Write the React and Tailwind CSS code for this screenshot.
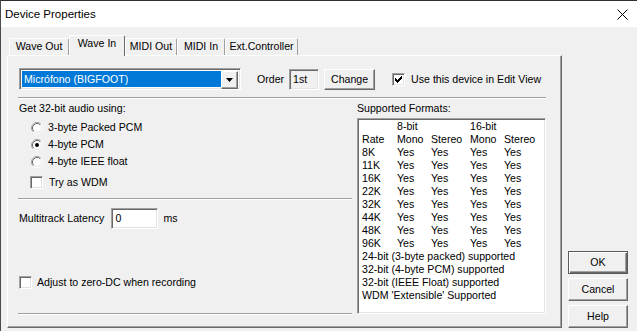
import React from "react";

const raised =
  "border border-t-white border-l-white border-r-[#696969] border-b-[#696969] shadow-[inset_-1px_-1px_0_#a0a0a0]";
const sunken =
  "border border-t-[#a0a0a0] border-l-[#a0a0a0] border-r-white border-b-white shadow-[inset_1px_1px_0_#696969,inset_-1px_-1px_0_#e3e3e3]";

function Etched({ className = "" }) {
  return <div className={`h-[2px] border-t border-b border-t-[#a0a0a0] border-b-white ${className}`} />;
}

function Check({ checked }) {
  const cols = [2, 3, 4, 3, 2, 1, 0];
  return (
    <span className={`w-[13px] h-[13px] bg-white ${sunken} flex items-center justify-center shrink-0`}>
      {checked && (
        <svg width="7" height="7" viewBox="0 0 7 7" shapeRendering="crispEdges">
          {cols.map((y, x) => (
            <rect key={x} x={x} y={y} width="1" height="3" fill="#000" />
          ))}
        </svg>
      )}
    </span>
  );
}

function Radio({ on }) {
  return (
    <svg width="12" height="12" viewBox="0 0 12 12" className="shrink-0">
      <circle cx="6" cy="6" r="5" fill="white" />
      <path d="M2.11 9.89 A5.5 5.5 0 0 1 9.89 2.11" stroke="#a0a0a0" fill="none" />
      <path d="M9.89 2.11 A5.5 5.5 0 0 1 2.11 9.89" stroke="#ffffff" fill="none" />
      <path d="M2.82 9.18 A4.5 4.5 0 0 1 9.18 2.82" stroke="#696969" fill="none" />
      <path d="M9.18 2.82 A4.5 4.5 0 0 1 2.82 9.18" stroke="#e3e3e3" fill="none" />
      {on && <circle cx="6" cy="6" r="2" fill="#000" />}
    </svg>
  );
}

const tabs = [
  { label: "Wave Out", w: "w-[60px]" },
  { label: "Wave In", w: "w-[56px]", active: true },
  { label: "MIDI Out", w: "w-[52px]" },
  { label: "MIDI In", w: "w-[48px]" },
  { label: "Ext.Controller", w: "w-[73px]" },
];

const rates = ["8K", "11K", "16K", "22K", "32K", "44K", "48K", "96K"];

export default function App() {
  return (
    <div className="w-[637px] h-[331px] overflow-hidden bg-[#f0f0f0] border-t border-l border-t-[#2e2e2e] border-l-[#4a4a4a] font-['Liberation_Sans',Arial,sans-serif] text-[10.6px] leading-[13px] text-black">
      {/* title bar */}
      <div className="h-[26px] bg-white flex items-center justify-between pl-[4px] pr-[9px]">
        <span className="text-[11.5px] mt-[1px]">Device Properties</span>
        <svg width="11" height="11" viewBox="0 0 11 11" className="mt-[1px]">
          <path d="M0.5 0.5 L10.5 10.5 M10.5 0.5 L0.5 10.5" stroke="#000" strokeWidth="1" />
        </svg>
      </div>

      <div className="flex pl-[6px] pt-[8px]">
        {/* tab control */}
        <div className="flex flex-col w-[555px]">
          <div className="flex items-end h-[20px] pl-[2px]">
            {tabs.map((t) =>
              t.active ? (
                <div
                  key={t.label}
                  className={`${t.w} h-[21px] -mb-[1px] relative z-10 bg-[#f0f0f0] border-t border-l border-r border-t-white border-l-white border-r-[#696969] rounded-t-[2px] text-center pt-[1px]`}
                >
                  {t.label}
                </div>
              ) : (
                <div
                  key={t.label}
                  className={`${t.w} h-[17px] border-t border-l border-r border-t-white border-l-white border-r-[#a0a0a0] rounded-t-[2px] text-center pt-[1px]`}
                >
                  {t.label}
                </div>
              )
            )}
          </div>

          <div className="h-[273px] border border-t-white border-l-white border-r-[#696969] border-b-[#696969] shadow-[inset_-1px_-1px_0_#a0a0a0] pl-[11px] pt-[12px]">
            {/* device row */}
            <div className="flex items-center h-[22px]">
              <div className={`w-[222px] h-[22px] bg-white ${sunken} flex p-[2px]`}>
                <div className="flex-1 h-[16px] bg-[#0078d7] text-white pl-[2px] flex items-center">
                  Micrófono (BIGFOOT)
                </div>
                <div className={`w-[17px] h-[18px] bg-[#f0f0f0] ${raised} flex items-center justify-center`}>
                  <svg width="7" height="4" viewBox="0 0 7 4">
                    <path d="M0 0 H7 L3.5 4 Z" fill="#000" />
                  </svg>
                </div>
              </div>
              <span className="ml-[16px]">Order</span>
              <div className={`ml-[5px] w-[30px] h-[21px] bg-[#f0f0f0] ${sunken} flex items-center pl-[3px]`}>1st</div>
              <div className={`ml-[5px] w-[51px] h-[21px] bg-[#f0f0f0] ${raised} flex items-center justify-center`}>
                Change
              </div>
              <div className="ml-[17px]">
                <Check checked />
              </div>
              <span className="ml-[6px]">Use this device in Edit View</span>
            </div>

            <Etched className="mt-[7px] w-[528px] -ml-[1px]" />

            <div className="flex -ml-[1px]">
              {/* left column */}
              <div className="w-[334px] flex flex-col">
                <div className="mt-[3px] pl-[1px]">Get 32-bit audio using:</div>
                <div className="mt-[4px] flex flex-col pl-[13px]">
                  {[
                    ["3-byte Packed PCM", false],
                    ["4-byte PCM", true],
                    ["4-byte IEEE float", false],
                  ].map(([l, on]) => (
                    <div key={l} className="h-[17px] flex items-center gap-[5px]">
                      <Radio on={on} />
                      <span>{l}</span>
                    </div>
                  ))}
                </div>
                <div className="mt-[6px] pl-[12px] flex items-center gap-[6px] h-[13px]">
                  <Check />
                  <span>Try as WDM</span>
                </div>
                <Etched className="mt-[9px]" />
                <div className="mt-[8px] pl-[1px] flex items-center h-[21px]">
                  <span>Multitrack Latency</span>
                  <div className={`ml-[7px] w-[47px] h-[21px] bg-white ${sunken} flex items-center pl-[3px]`}>0</div>
                  <span className="ml-[5px]">ms</span>
                </div>
                <div className="mt-[47px] pl-[1px] flex items-center gap-[5px] h-[13px]">
                  <Check />
                  <span>Adjust to zero-DC when recording</span>
                </div>
                <Etched className="mt-[24px]" />
              </div>

              {/* right column */}
              <div className="ml-[5px] w-[189px] flex flex-col">
                <div className="mt-[3px]">Supported Formats:</div>
                <div className={`mt-[3px] h-[196px] bg-white ${sunken} pl-[4px] pt-[1px]`}>
                  <div className="grid grid-cols-[35px_34px_39px_34px_auto]">
                    <span />
                    <span className="col-span-2">8-bit</span>
                    <span className="col-span-2">16-bit</span>
                    <span>Rate</span>
                    <span>Mono</span>
                    <span>Stereo</span>
                    <span>Mono</span>
                    <span>Stereo</span>
                    {rates.map((r) => (
                      <React.Fragment key={r}>
                        <span>{r}</span>
                        <span>Yes</span>
                        <span>Yes</span>
                        <span>Yes</span>
                        <span>Yes</span>
                      </React.Fragment>
                    ))}
                  </div>
                  <div>24-bit (3-byte packed) supported</div>
                  <div>32-bit (4-byte PCM) supported</div>
                  <div>32-bit (IEEE Float) supported</div>
                  <div>WDM 'Extensible' Supported</div>
                </div>
              </div>
            </div>
          </div>
        </div>

        {/* dialog buttons */}
        <div className="ml-[6px] pt-[216px] flex flex-col gap-[4px]">
          <div className="w-[60px] h-[23px] bg-[#f0f0f0] border border-[#5a5a5a] shadow-[inset_1px_1px_0_white,inset_-1px_-1px_0_#696969,inset_-2px_-2px_0_#a0a0a0] flex items-center justify-center">
            OK
          </div>
          <div className={`w-[60px] h-[23px] bg-[#f0f0f0] ${raised} flex items-center justify-center`}>Cancel</div>
          <div className={`w-[60px] h-[23px] bg-[#f0f0f0] ${raised} flex items-center justify-center`}>Help</div>
        </div>
      </div>
    </div>
  );
}
